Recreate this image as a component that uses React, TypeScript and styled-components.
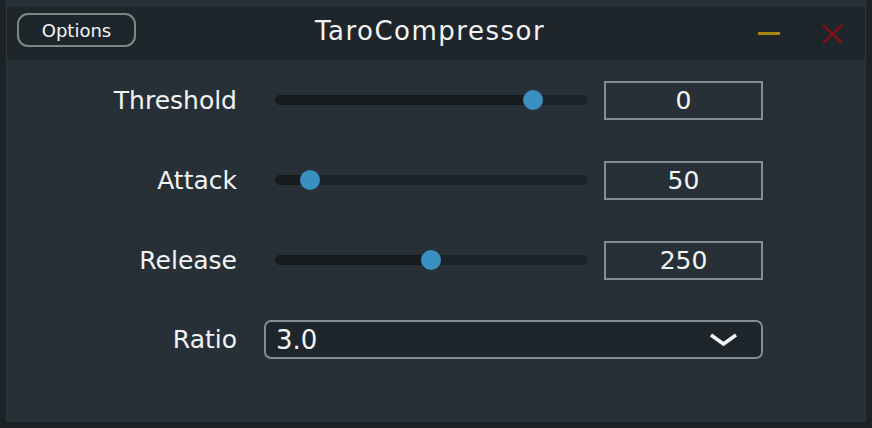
import React from "react";
import styled, { createGlobalStyle } from "styled-components";

const GlobalStyle = createGlobalStyle`
  html, body { margin: 0; padding: 0; background: #1c2226; }
  * { box-sizing: border-box; }
`;

const FONT = `"DejaVu Sans", "Verdana", sans-serif`;

const Frame = styled.div`
  width: 872px;
  height: 428px;
  background: #1c2226;
  padding: 0 6px 6px 6px;
  font-family: ${FONT};
  color: #f2f4f5;
`;

const Panel = styled.div`
  height: 100%;
  background: #263036;
  border: 1px solid #2d373c;
  border-top: none;
  display: flex;
  flex-direction: column;
`;

const TitleBar = styled.div`
  margin-top: 7px;
  height: 53px;
  background: #1f262b;
  display: grid;
  grid-template-columns: 1fr auto 1fr;
  align-items: center;
  padding: 0 22px 0 10px;
`;

const OptionsButton = styled.button`
  justify-self: start;
  width: 119px;
  height: 34px;
  border: 2px solid #7c8689;
  border-radius: 11px;
  background: #1f262b;
  color: #f4f6f7;
  font-family: ${FONT};
  font-size: 18px;
  padding: 0;
  margin-top: -7px;
`;

const Title = styled.div`
  font-size: 26px;
  letter-spacing: 1.5px;
  margin-top: -6px;
`;

const WindowButtons = styled.div`
  justify-self: end;
  display: flex;
  align-items: center;
  gap: 42px;
`;

const Body = styled.div`
  display: flex;
  flex-direction: column;
  padding: 20px 0 0 0;
`;

const Row = styled.div`
  display: grid;
  grid-template-columns: 230px 313px 159px;
  column-gap: 0;
  align-items: center;
  height: 40px;
  margin-bottom: 40px;
`;

const Label = styled.div`
  text-align: right;
  font-size: 25px;
`;

const SliderWrap = styled.div`
  position: relative;
  margin-left: 38px;
  width: 313px;
  height: 20px;
  display: flex;
  align-items: center;
`;

const Track = styled.div`
  width: 100%;
  height: 10px;
  border-radius: 5px;
  background: #1d2429;
  overflow: hidden;
`;

const Fill = styled.div`
  height: 100%;
  background: #161b1e;
`;

const Thumb = styled.div`
  position: absolute;
  top: 0;
  width: 20px;
  height: 20px;
  margin-left: -10px;
  border-radius: 50%;
  background: #3a90c1;
`;

const ValueBox = styled.div`
  margin-left: 54px;
  width: 159px;
  height: 39px;
  border: 2px solid #848d91;
  display: flex;
  align-items: center;
  justify-content: center;
  font-size: 25px;
`;

const RatioRow = styled.div`
  display: flex;
  align-items: center;
  height: 39px;
`;

const RatioLabel = styled(Label)`
  width: 230px;
`;

const Dropdown = styled.div`
  margin-left: 27px;
  width: 499px;
  height: 39px;
  border: 2px solid #848d91;
  border-radius: 7px;
  background: #1f262b;
  display: flex;
  align-items: center;
  justify-content: space-between;
  padding: 0 23px 0 10px;
  font-size: 26px;
`;

const sliders = [
  { label: "Threshold", value: "0", pos: 0.846 },
  { label: "Attack", value: "50", pos: 0.085 },
  { label: "Release", value: "250", pos: 0.498 },
];

function Slider({ pos }: { pos: number }) {
  const x = 10 + pos * 293;
  return (
    <SliderWrap>
      <Track>
        <Fill style={{ width: `${x}px` }} />
      </Track>
      <Thumb style={{ left: `${x}px` }} />
    </SliderWrap>
  );
}

export default function App() {
  return (
    <>
      <GlobalStyle />
      <Frame>
        <Panel>
          <TitleBar>
            <OptionsButton>Options</OptionsButton>
            <Title>TaroCompressor</Title>
            <WindowButtons>
              <svg width="22" height="4" viewBox="0 0 22 4">
                <rect x="0" y="0" width="22" height="3" fill="#a8870f" />
              </svg>
              <svg width="21" height="20" viewBox="0 0 21 20">
                <path d="M1 1 L20 19 M20 1 L1 19" stroke="#8c0d18" strokeWidth="2.4" />
              </svg>
            </WindowButtons>
          </TitleBar>
          <Body>
            {sliders.map((s) => (
              <Row key={s.label}>
                <Label>{s.label}</Label>
                <Slider pos={s.pos} />
                <ValueBox>{s.value}</ValueBox>
              </Row>
            ))}
            <RatioRow>
              <RatioLabel>Ratio</RatioLabel>
              <Dropdown>
                <span>3.0</span>
                <svg width="29" height="14" viewBox="0 0 29 14">
                  <path d="M2 2 L14.5 11 L27 2" stroke="#f2f4f5" strokeWidth="3.5" fill="none" />
                </svg>
              </Dropdown>
            </RatioRow>
          </Body>
        </Panel>
      </Frame>
    </>
  );
}
